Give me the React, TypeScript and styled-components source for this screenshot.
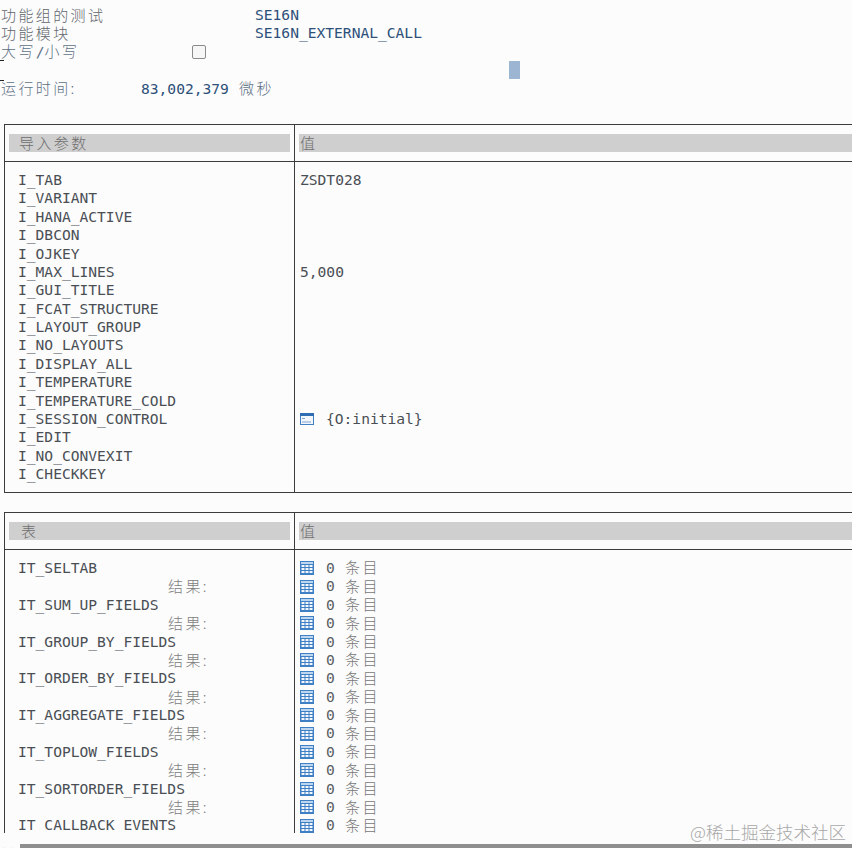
import styled, { createGlobalStyle } from "styled-components";

const GlobalStyle = createGlobalStyle`
  html, body {
    margin: 0;
    padding: 0;
    background-color: #fcfcfc;
  }
`;

const Page = styled.div`
  position: relative;
  width: 852px;
  height: 848px;
  padding-top: 6px;
  box-sizing: border-box;
  overflow: hidden;
  background-color: #fcfcfc;
  font-family: "DejaVu Sans Mono", "Noto Sans CJK SC", monospace;
  font-size: 14.6px;
  line-height: 18.4px;
  color: #4a4f55;
`;

const Cjk = styled.span`
  font-family: "Noto Sans CJK SC", sans-serif;
  font-size: 15px;
  font-weight: 300;
  letter-spacing: 2.4px;
`;

const InfoRow = styled.div`
  display: flex;
  align-items: center;
  height: 18.4px;
  padding-left: 1px;
  color: #62676d;
  white-space: nowrap;
`;

const InfoLabel = styled.div`
  width: 254px;
  flex: none;
`;

const InfoValue = styled.div`
  color: #2c5079;
`;

const CaseLabel = styled.div`
  width: 191px;
  flex: none;
  color: #5f7186;
`;

const Checkbox = styled.div`
  width: 12px;
  height: 12px;
  border: 1px solid #8a8a8a;
  border-radius: 2px;
  background-color: #f6f6f6;
`;

const CursorRow = styled.div`
  height: 18.4px;
  padding-left: 509px;
`;

const Cursor = styled.div`
  width: 11px;
  height: 18px;
  background-color: #9bb5d3;
`;

const RuntimeLabel = styled.div`
  width: 140px;
  flex: none;
  color: #5f7186;
`;

const RuntimeValue = styled.div`
  width: 98px;
  flex: none;
  color: #2c5079;
`;

const RuntimeUnit = styled.div`
  color: #5f7186;
`;

const Tick = styled.div<{ $top: number }>`
  position: absolute;
  left: 0;
  top: ${(props) => props.$top}px;
  width: 4px;
  height: 1px;
  background-color: #222;
`;

const Table = styled.div<{ $top: number; $left: number; $open?: boolean }>`
  margin-top: ${(props) => props.$top}px;
  margin-left: ${(props) => props.$left}px;
  border-top: 1px solid #3c3c3c;
  border-left: 1px solid #3c3c3c;
  border-bottom: ${(props) => (props.$open ? "none" : "1px solid #3c3c3c")};
`;

const HeaderRow = styled.div<{ $first: number }>`
  display: grid;
  grid-template-columns: ${(props) => props.$first}px 1fr;
  height: 36px;
  border-bottom: 1px solid #3c3c3c;
`;

const HeaderCell = styled.div<{ $divider?: boolean }>`
  display: flex;
  align-items: center;
  padding: ${(props) => (props.$divider ? "0 0 0 4px" : "0 4px 0 4px")};
  border-left: ${(props) => (props.$divider ? "1px solid #3c3c3c" : "none")};
`;

const HeaderBar = styled.div<{ $indent: number }>`
  flex: 1;
  height: 18px;
  padding-left: ${(props) => props.$indent}px;
  background-color: #cfcfcf;
  color: #6e6e6e;
  line-height: 18px;
  white-space: nowrap;
`;

const Body = styled.div<{ $first: number; $height: number }>`
  display: grid;
  grid-template-columns: ${(props) => props.$first}px 1fr;
  height: ${(props) => props.$height}px;
  overflow: hidden;
`;

const NameColumn = styled.div`
  padding: 9px 0 0 13px;
`;

const ValueColumn = styled.div`
  padding: 9px 0 0 5px;
  border-left: 1px solid #3c3c3c;
`;

const Line = styled.div`
  display: flex;
  align-items: center;
  height: 18.4px;
  white-space: nowrap;
`;

const ResultLine = styled(Line)`
  padding-left: 150px;
  color: #808080;
`;

const ValueIcon = styled.svg`
  display: block;
  flex: none;
  width: 14px;
  height: 14px;
  margin-right: 12px;
`;

const EntryCount = styled.span`
  width: 19px;
  flex: none;
  color: #5a5f64;
`;

const EntryUnit = styled.span`
  color: #777;
`;

const ScrollRow = styled.div`
  display: flex;
  align-items: flex-start;
  height: 16px;
  margin-top: 11px;
`;

const ScrollArrows = styled.div`
  width: 20px;
  flex: none;
  padding-top: 2px;
  padding-left: 1px;
  box-sizing: border-box;
  color: #3f78b8;
  font-size: 8px;
  line-height: 8px;
`;

const ScrollThumb = styled.div`
  flex: 1;
  height: 16px;
  background-color: #8f8f8f;
`;

const Watermark = styled.div`
  position: absolute;
  right: 6px;
  bottom: 6px;
  font-family: "Noto Sans CJK SC", sans-serif;
  font-size: 17.5px;
  line-height: 20px;
  font-weight: 300;
  color: #a8a8a8;
  white-space: nowrap;
`;

const TableIcon = () => (
  <ValueIcon viewBox="0 0 14 14">
    <rect width="14" height="14" fill="#3f7fc4" />
    <rect x="1" y="1" width="12" height="2" fill="#bcd6ef" />
    {[1.5, 5.5, 9.5].map((x) =>
      [4, 7, 10].map((y) => (
        <rect key={`${x}-${y}`} x={x} y={y} width="3" height="2" fill="#f4f8fc" />
      ))
    )}
  </ValueIcon>
);

const WindowIcon = () => (
  <ValueIcon viewBox="0 0 14 14">
    <rect x="0.5" y="1.5" width="13" height="11" fill="#f2f6fb" stroke="#3f7fc4" />
    <rect x="0" y="1" width="14" height="3" fill="#2f6db3" />
    <path d="M2 6.5h3M2 10h9" stroke="#7fa6d2" fill="none" />
  </ValueIcon>
);

const importNames = [
  "I_TAB",
  "I_VARIANT",
  "I_HANA_ACTIVE",
  "I_DBCON",
  "I_OJKEY",
  "I_MAX_LINES",
  "I_GUI_TITLE",
  "I_FCAT_STRUCTURE",
  "I_LAYOUT_GROUP",
  "I_NO_LAYOUTS",
  "I_DISPLAY_ALL",
  "I_TEMPERATURE",
  "I_TEMPERATURE_COLD",
  "I_SESSION_CONTROL",
  "I_EDIT",
  "I_NO_CONVEXIT",
  "I_CHECKKEY",
];

const tableNames = [
  "IT_SELTAB",
  "IT_SUM_UP_FIELDS",
  "IT_GROUP_BY_FIELDS",
  "IT_ORDER_BY_FIELDS",
  "IT_AGGREGATE_FIELDS",
  "IT_TOPLOW_FIELDS",
  "IT_SORTORDER_FIELDS",
  "IT_CALLBACK_EVENTS",
];

const App = () => {
  return (
    <Page>
      <GlobalStyle />
      <InfoRow>
        <InfoLabel>
          <Cjk>功能组的测试</Cjk>
        </InfoLabel>
        <InfoValue>SE16N</InfoValue>
      </InfoRow>
      <InfoRow>
        <InfoLabel>
          <Cjk>功能模块</Cjk>
        </InfoLabel>
        <InfoValue>SE16N_EXTERNAL_CALL</InfoValue>
      </InfoRow>
      <InfoRow>
        <CaseLabel>
          <Cjk>大写</Cjk>/<Cjk>小写</Cjk>
        </CaseLabel>
        <Checkbox />
      </InfoRow>
      <CursorRow>
        <Cursor />
      </CursorRow>
      <InfoRow>
        <RuntimeLabel>
          <Cjk>运行时间:</Cjk>
        </RuntimeLabel>
        <RuntimeValue>83,002,379</RuntimeValue>
        <RuntimeUnit>
          <Cjk>微秒</Cjk>
        </RuntimeUnit>
      </InfoRow>
      <Tick $top={60} />
      <Tick $top={80} />

      <Table $top={26} $left={4}>
        <HeaderRow $first={289}>
          <HeaderCell>
            <HeaderBar $indent={10}>
              <Cjk>导入参数</Cjk>
            </HeaderBar>
          </HeaderCell>
          <HeaderCell $divider>
            <HeaderBar $indent={1}>
              <Cjk>值</Cjk>
            </HeaderBar>
          </HeaderCell>
        </HeaderRow>
        <Body $first={289} $height={330}>
          <NameColumn>
            {importNames.map((name) => (
              <Line key={name}>{name}</Line>
            ))}
          </NameColumn>
          <ValueColumn>
            {importNames.map((name) => {
              if (name === "I_TAB") return <Line key={name}>ZSDT028</Line>;
              if (name === "I_MAX_LINES") return <Line key={name}>5,000</Line>;
              if (name === "I_SESSION_CONTROL") {
                return (
                  <Line key={name}>
                    <WindowIcon />
                    {"{O:initial}"}
                  </Line>
                );
              }
              return <Line key={name} />;
            })}
          </ValueColumn>
        </Body>
      </Table>

      <Table $top={19} $left={4} $open>
        <HeaderRow $first={289}>
          <HeaderCell>
            <HeaderBar $indent={12}>
              <Cjk>表</Cjk>
            </HeaderBar>
          </HeaderCell>
          <HeaderCell $divider>
            <HeaderBar $indent={1}>
              <Cjk>值</Cjk>
            </HeaderBar>
          </HeaderCell>
        </HeaderRow>
        <Body $first={289} $height={283}>
          <NameColumn>
            {tableNames.map((name, index) => (
              <div key={name}>
                <Line>{name}</Line>
                {index < tableNames.length - 1 && (
                  <ResultLine>
                    <Cjk>结果:</Cjk>
                  </ResultLine>
                )}
              </div>
            ))}
          </NameColumn>
          <ValueColumn>
            {Array.from({ length: 15 }).map((_, index) => (
              <Line key={index}>
                <TableIcon />
                <EntryCount>0</EntryCount>
                <EntryUnit>
                  <Cjk>条目</Cjk>
                </EntryUnit>
              </Line>
            ))}
          </ValueColumn>
        </Body>
      </Table>

      <ScrollRow>
        <ScrollArrows>‹ ›</ScrollArrows>
        <ScrollThumb />
      </ScrollRow>
      <Watermark>@稀土掘金技术社区</Watermark>
    </Page>
  );
};

export default App;
